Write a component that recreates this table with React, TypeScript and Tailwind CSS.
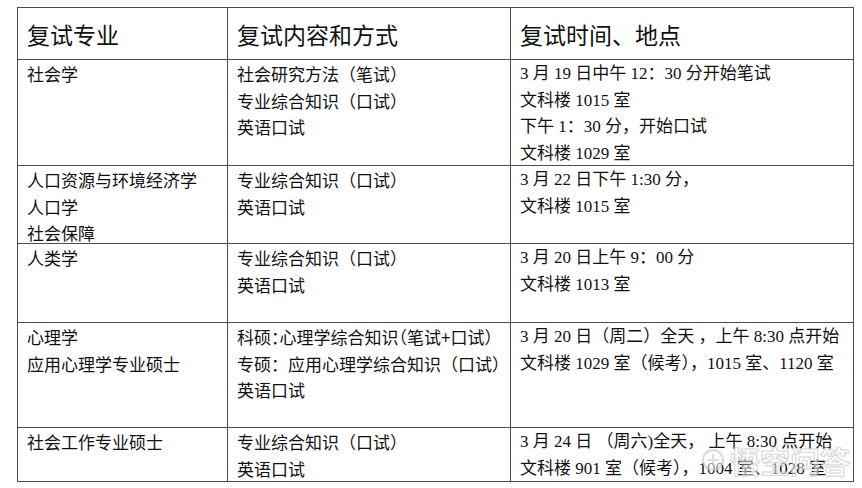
import React from "react";

const sans = "font-['Noto_Sans_CJK_SC',sans-serif]";
const serif = "font-['Liberation_Serif','Noto_Sans_CJK_SC',serif]";

function Cell({ lines, kind }: { lines: React.ReactNode[]; kind: "sans" | "serif" }) {
  return (
    <div
      className={`border-r border-b border-[#4d4d4d] pl-[9px] pt-[1px] text-[17px] leading-[26.5px] text-[#111] whitespace-nowrap ${
        kind === "serif" ? serif : sans
      }`}
    >
      {lines.map((l, i) => (
        <div key={i}>{l}</div>
      ))}
    </div>
  );
}

function Head({ text }: { text: string }) {
  return (
    <div
      className={`border-r border-b border-[#4d4d4d] pl-[9px] pt-[2px] flex items-center text-[23px] text-[#111] ${sans}`}
    >
      {text}
    </div>
  );
}

const H = ({ children }: { children: React.ReactNode }) => (
  <span className="[font-feature-settings:'halt']">{children}</span>
);

export default function App() {
  const rows: { a: React.ReactNode[]; b: React.ReactNode[]; c: React.ReactNode[] }[] = [
    {
      a: ["社会学"],
      b: ["社会研究方法（笔试）", "专业综合知识（口试）", "英语口试"],
      c: ["3 月 19 日中午 12：30 分开始笔试", "文科楼 1015 室", "下午 1：30 分，开始口试", "文科楼 1029 室"],
    },
    {
      a: ["人口资源与环境经济学", "人口学", "社会保障"],
      b: ["专业综合知识（口试）", "英语口试"],
      c: ["3 月 22 日下午 1:30 分，", "文科楼 1015 室"],
    },
    {
      a: ["人类学"],
      b: ["专业综合知识（口试）", "英语口试"],
      c: ["3 月 20 日上午 9：00 分", "文科楼 1013 室"],
    },
    {
      a: ["心理学", "应用心理学专业硕士"],
      b: [
        <>
          科硕<H>：</H>心理学综合知识<H>（</H>笔试+口试）
        </>,
        "专硕：应用心理学综合知识（口试）",
        "英语口试",
      ],
      c: ["3 月 20 日（周二）全天 ，上午 8:30 点开始", "文科楼 1029 室（候考），1015 室、1120 室"],
    },
    {
      a: ["社会工作专业硕士"],
      b: ["专业综合知识（口试）", "英语口试"],
      c: ["3 月 24 日 （周六)全天， 上午 8:30 点开始", "文科楼 901 室（候考），1004 室、1028 室"],
    },
  ];

  return (
    <div className="relative w-[862px] h-[488px] bg-white pt-[7px] pl-[17px] overflow-hidden">
      <div className="grid grid-cols-[210px_283px_343px] grid-rows-[52px_106px_78px_79px_105px_54px] w-[837px] border-l border-t border-[#4d4d4d]">
        <Head text="复试专业" />
        <Head text="复试内容和方式" />
        <Head text="复试时间、地点" />
        {rows.map((r, i) => (
          <React.Fragment key={i}>
            <Cell lines={r.a} kind="sans" />
            <Cell lines={r.b} kind="sans" />
            <Cell lines={r.c} kind="serif" />
          </React.Fragment>
        ))}
      </div>
      {/* watermark */}
      <div className="absolute left-[700px] top-[443px] flex items-center gap-[4px] opacity-75 pointer-events-none">
        <svg width="26" height="30" viewBox="0 0 26 30">
          <circle cx="13" cy="15" r="10" fill="rgba(255,255,255,0.7)" stroke="#cfcfcf" strokeWidth="2" />
          <path d="M13 9 v12 M7 15 h12" stroke="#d4d4d4" strokeWidth="2" fill="none" />
        </svg>
        <span
          className={`text-[30px] leading-[34px] text-white/70 [-webkit-text-stroke:1px_#c8c8c8] ${sans} font-bold`}
        >
          悟空问答
        </span>
      </div>
    </div>
  );
}
